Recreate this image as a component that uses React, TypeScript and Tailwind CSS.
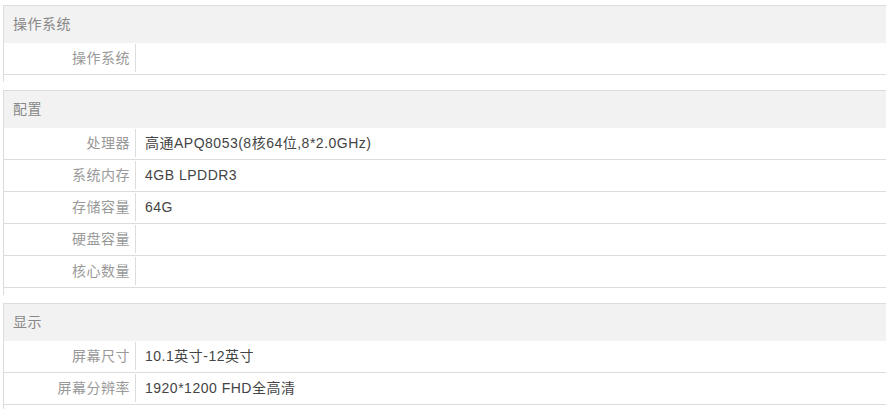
const sections = [
  {
    title: "操作系统",
    rows: [{ label: "操作系统", value: "" }],
  },
  {
    title: "配置",
    rows: [
      { label: "处理器", value: "高通APQ8053(8核64位,8*2.0GHz)" },
      { label: "系统内存", value: "4GB LPDDR3" },
      { label: "存储容量", value: "64G" },
      { label: "硬盘容量", value: "" },
      { label: "核心数量", value: "" },
    ],
  },
  {
    title: "显示",
    rows: [
      { label: "屏幕尺寸", value: "10.1英寸-12英寸" },
      { label: "屏幕分辨率", value: "1920*1200 FHD全高清" },
    ],
  },
];

const App = () => {
  return (
    <div
      className="bg-white min-h-[409px] pt-[5px] pl-[3px] text-[14px] tracking-[0.5px]"
      style={{ fontFamily: '"Liberation Sans", "Noto Sans CJK SC", sans-serif' }}
    >
      {sections.map((section) => (
        <div
          key={section.title}
          className="w-[883px] border-l border-t border-[#dcdcdc] pb-[7px] mb-[8px]"
        >
          {/* Header */}
          <div className="h-[37px] bg-[#f2f2f2] pl-[9px] flex items-center text-[#888]">
            {section.title}
          </div>

          {/* Rows */}
          {section.rows.map((row) => (
            <div
              key={row.label}
              className="flex h-[32px] border-b border-[#dcdcdc]"
            >
              <div className="w-[132px] mt-[1px] h-[28px] border-r border-[#ddd] pr-[5px] flex items-center justify-end text-[#999]">
                {row.label}
              </div>
              <div className="pl-[9px] flex items-center text-[#444] -mt-[1px]">
                {row.value}
              </div>
            </div>
          ))}
        </div>
      ))}
    </div>
  );
};

export default App;
